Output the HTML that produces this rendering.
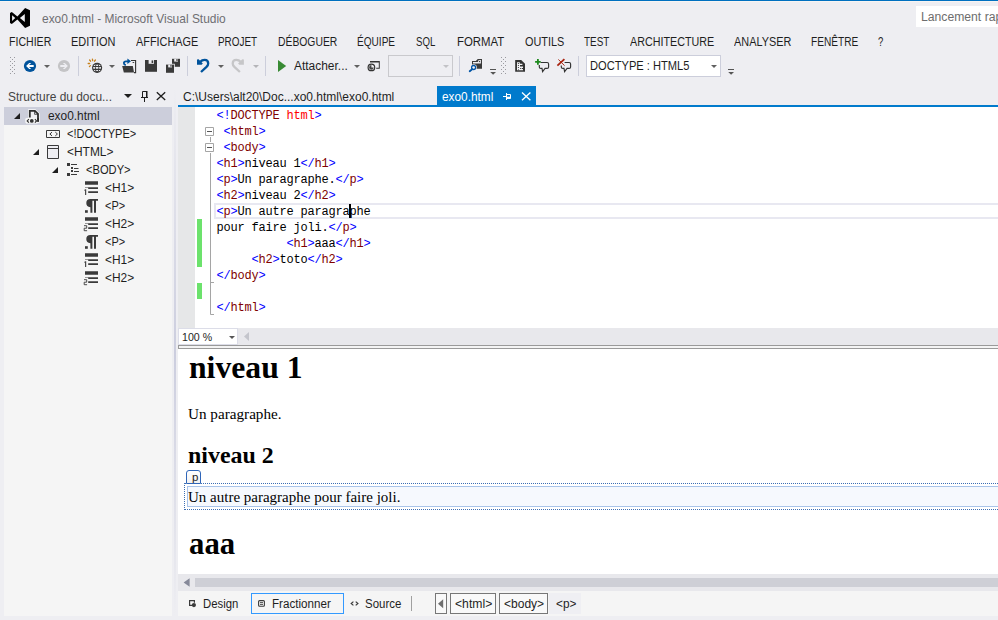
<!DOCTYPE html>
<html><head><meta charset="utf-8"><title>exo0.html - Microsoft Visual Studio</title>
<style>
html,body{margin:0;padding:0;background:#eeeef2;}
body{width:998px;height:620px;overflow:hidden;}
#root{position:relative;width:998px;height:620px;overflow:hidden;background:#eeeef2;font-family:"Liberation Sans",sans-serif;}
#root div,#root span,#root svg{position:absolute;}
.t{white-space:nowrap;transform-origin:0 50%;}
.sep{width:1px;background:#cccedb;top:56px;height:20px;}
.code{left:216.5px;height:16px;font:12px/16px "Liberation Mono",monospace;letter-spacing:-0.2px;white-space:pre;color:#000;}
.code b{font-weight:normal;color:#0000ff;}
.code i{font-style:normal;color:#800000;}
.code u{text-decoration:none;color:#ff0000;}
#root .code b,#root .code i,#root .code u{position:static;}

</style></head>
<body>
<div id="root">
<!-- window frame -->
<div style="left:0;top:0;width:998px;height:1px;background:#0070c0"></div>
<div style="left:0;top:1px;width:998px;height:1px;background:#f7f5f3"></div>
<!-- quick launch -->
<div style="left:916px;top:6px;width:90px;height:21px;background:#fff"></div>

<!-- ===== toolbar ===== -->
<div class="sep" style="left:78px"></div>
<div class="sep" style="left:187px"></div>
<div class="sep" style="left:265px"></div>
<div class="sep" style="left:459px"></div>
<div class="sep" style="left:578px"></div>
<div style="left:388px;top:55px;width:65px;height:22px;border:1px solid #c9c9cd;box-sizing:border-box;background:#eeeef2"></div>
<div style="left:586px;top:55px;width:135px;height:22px;border:1px solid #cccedb;box-sizing:border-box;background:#fff"></div>
<svg id="tb" style="left:0;top:52px" width="760" height="30" viewBox="0 52 760 30">
 <!-- grips -->
 <g fill="#9a9aa0">
  <path d="M10 57h1v1h-1zM14 57h1v1h-1zM12 59h1v1h-1zM10 61h1v1h-1zM14 61h1v1h-1zM12 63h1v1h-1zM10 65h1v1h-1zM14 65h1v1h-1zM12 67h1v1h-1zM10 69h1v1h-1zM14 69h1v1h-1zM12 71h1v1h-1zM10 73h1v1h-1zM14 73h1v1h-1z"/>
  <path transform="translate(491 0)" d="M10 57h1v1h-1zM14 57h1v1h-1zM12 59h1v1h-1zM10 61h1v1h-1zM14 61h1v1h-1zM12 63h1v1h-1zM10 65h1v1h-1zM14 65h1v1h-1zM12 67h1v1h-1zM10 69h1v1h-1zM14 69h1v1h-1zM12 71h1v1h-1zM10 73h1v1h-1zM14 73h1v1h-1z"/>
 </g>
 <!-- back / forward -->
 <circle cx="30" cy="66" r="6.1" fill="#00539c"/>
 <path d="M26.100 66l3.100-3h2l-2.200 2.100h4.700v1.800h-4.700l2.200 2.100h-2z" fill="#fff"/>
 <circle cx="64" cy="66" r="6.1" fill="#c4c4c6"/>
 <path d="M67.900 66l-3.100-3h-2l2.200 2.100h-4.700v1.800h4.700l-2.200 2.100h2z" fill="#eeeef2"/>
 <!-- dropdown arrows -->
 <g fill="#606060">
  <path d="M44 65h6l-3 3z"/><path d="M109 65h6l-3 3z"/><path d="M218 65h6l-3 3z"/><path d="M354 65h6l-3 3z"/><path d="M711 65h6l-3 3z"/>
 </g>
 <path d="M253 65h6l-3 3z" fill="#b4b4b8"/><path d="M443 65h6l-3 3z" fill="#c2c2c6"/>
 <!-- new web (globe + sparks) -->
 <circle cx="97.1" cy="67.8" r="5.1" fill="#3a3a3a"/>
 <clipPath id="gc"><circle cx="97.1" cy="67.8" r="3.9"/></clipPath>
 <g clip-path="url(#gc)" fill="#eeeef2"><path d="M92 64.4h11v1.500h-11zM92 67h11v1.800h-11zM92 69.900h11v1.400h-11z"/></g>
 <ellipse cx="97.1" cy="67.8" rx="1.7" ry="4.4" fill="none" stroke="#3a3a3a" stroke-width="0.9"/>
 <g stroke="#c8801a" stroke-width="1.3" stroke-linecap="round"><path d="M88.200 63.500h1.400M89.600 60l1 1.200M92.400 59.200l.3 1.500M95.400 60l-.9 1.200M89.400 66.600l1-1"/></g>
 <!-- open file -->
 <path d="M131 60.500h4.600v12.100h-1.600" fill="none" stroke="#333" stroke-width="1.100"/>
 <path d="M132.600 62h1.600v.9h-1.600z" fill="#333"/>
 <path d="M122.200 66.100h10.600l1.200 6.500h-10.200z" fill="#3a3a3a"/>
 <path d="M125.800 65.200c-2.600-.6-2.600-3.800.2-3.900h2.600" fill="none" stroke="#00539c" stroke-width="1.800"/>
 <path d="M127.400 58.600l3.600 2.700-3.600 2.700z" fill="#00539c"/>
 <!-- save -->
 <path d="M145 60h12v11.8h-12z" fill="#3a3a3a"/><path d="M148.6 60h5.4v3.8h-5.4z" fill="#eeeef2"/><path d="M151.6 60.4h1.6v2.6h-1.6z" fill="#3a3a3a"/>
 <!-- save all -->
 <path d="M172 58.8h8v8h-8z" fill="#3a3a3a"/><path d="M174.2 58.8h3.8v2.8h-3.8z" fill="#eeeef2"/><path d="M176.4 59h1.2v2h-1.2z" fill="#3a3a3a"/>
 <path d="M165.4 63.8h9.4v9.6h-9.4z" fill="#eeeef2"/>
 <path d="M166 64.6h8v8.2h-8z" fill="#3a3a3a"/><path d="M168.2 64.6h3.8v2.8h-3.8z" fill="#eeeef2"/><path d="M170.4 64.8h1.2v2h-1.2z" fill="#3a3a3a"/>
 <!-- undo -->
 <defs><g id="undo"><path d="M200.300 61.800C201.500 60.400 203 59.800 204.600 59.800 207 59.800 208.200 61.600 208.200 63.400 208.200 65 207.400 66 206.500 66.900L201 72" fill="none" stroke-width="2.300"/>
 <path d="M197 59.500l1.600-.3 4.200 4.400-1.200 1.200h-4.600z" stroke="none"/></g></defs>
 <use href="#undo" fill="#00539c" stroke="#00539c"/>
 <!-- redo -->
 <use href="#undo" fill="#c6c6c8" stroke="#c6c6c8" transform="translate(440.900 0) scale(-1 1)"/>
 <!-- play -->
 <path d="M278 60l8.200 6-8.200 6z" fill="#388a34"/>
 <!-- process icon -->
 <path d="M370 61h9.800v7.800h-3.600v-1h2.600v-5.200h-8.800z" fill="#333"/>
 <circle cx="371.400" cy="67.400" r="3.300" fill="#eeeef2" stroke="#333" stroke-width="1.200"/>
 <path d="M371.400 67.400v-2.300a2.300 2.300 0 1 0 2.300 2.300z" fill="#444"/>
 <!-- find in files -->
 <path d="M472 61.100h3.800l2-2h4.200v9.700h-10z" fill="#3a3a3a"/>
 <path d="M473 62h4.700l1-1.900h2.200v3.300h-7.900z" fill="#eeeef2"/><circle cx="479.500" cy="61.500" r=".65" fill="#3a3a3a"/>
 <circle cx="473.600" cy="67.500" r="3.200" fill="#eeeef2"/>
 <path d="M472.200 69.100l-2.500 2.200" stroke="#eeeef2" stroke-width="3" stroke-linecap="round"/>
 <circle cx="473.600" cy="67.500" r="2" fill="#f4f4f6" stroke="#0054a6" stroke-width="1.300"/><path d="M472.100 69.200l-2.400 2" stroke="#0054a6" stroke-width="1.800" stroke-linecap="round"/>
 <!-- overflow -->
 <g fill="#555"><path d="M490 69h6v1.100h-6zM490.200 72h5.800l-2.900 2.700zM728 69h6v1.100h-6zM728.200 72h5.800l-2.900 2.700z"/></g>
 <!-- doc outline icon -->
 <path d="M515.200 60h6l3.800 3.800v8h-9.800z" fill="#333"/>
 <path d="M517 62.200h2.800v1.500h2.600v1.400h-2.400v1.500h3v3.600h-6z" fill="#f2f2f5"/><g fill="#333"><circle cx="518.400" cy="63.500" r=".6"/><circle cx="518.400" cy="65.500" r=".6"/><circle cx="518.400" cy="67.500" r=".6"/><circle cx="520.600" cy="68.500" r=".6"/><path d="M518.100 69.300h.7v.9h-.7zM521.800 68h1.200v.9h-1.200z"/></g>
 <!-- comment -->
 <path d="M540.600 62.500h6.500q1.500 0 1.500 1.500v2.900q0 1.500-1.500 1.500h-2l-2.500 3.200-.6-3.200h-1.200q-1.500 0-1.500-1.500v-1.900" fill="none" stroke="#333" stroke-width="1.150"/>
 <path d="M537 59.100h1.800v1.900h1.900v1.800h-1.900v1.900h-1.800v-1.900h-1.900v-1.800h1.900z" fill="#1e8a1e"/>
 <!-- uncomment -->
 <path d="M564.600 62.500h4.500q1.500 0 1.500 1.500v2.900q0 1.500-1.500 1.500h-2l-2.500 3.200-.6-3.200h-1.200q-1.500 0-1.500-1.500v-1.400" fill="none" stroke="#333" stroke-width="1.150"/>
 <path d="M564.400 59.200l-7 6.400" stroke="#a8230f" stroke-width="1.800"/><path d="M558.400 59.500l6.200 6.200" stroke="#a8230f" stroke-width="1"/>
</svg>

<!-- ===== VS logo ===== -->
<svg style="left:8px;top:6px" width="24" height="24" viewBox="8 6 24 24">
 <path fill="#000" fill-rule="evenodd" d="M10 13.100l1.800-1.100 5.600 4.400 7.700-8.400 4.900 2.200v15.600l-4.900 2.100-7.700-8.300-5.600 4.400-1.800-1zM12.100 15.200v5.800l3.100-2.900zM24.800 14v8.100l-4.900-4.100z"/>
</svg>

<!-- ===== left panel ===== -->
<div style="left:4px;top:107px;width:168px;height:509px;background:#f5f5f5"></div>
<div style="left:4px;top:107px;width:168px;height:18px;background:#cccedb"></div>
<svg style="left:0;top:86px" width="176" height="210" viewBox="0 86 176 210">
 <!-- header glyphs -->
 <path d="M124 94h8l-4 4z" fill="#1e1e1e"/>
 <path d="M142.500 91.500h4v6" fill="none" stroke="#1e1e1e" stroke-width="1"/><path d="M142.500 91.500v6" stroke="#1e1e1e" stroke-width="1"/><path d="M146 91h1.500v6.500h-1.500z" fill="#1e1e1e"/>
 <path d="M141 97h7v1h-7zM144 98h1v4h-1z" fill="#1e1e1e"/>
 <path d="M156.800 92.200l8.400 7.800M165.200 92.200l-8.400 7.800" stroke="#1e1e1e" stroke-width="1.300"/>
 <!-- expanders -->
 <g fill="#1e1e1e"><path d="M20 113v6h-6z"/><path d="M39 149v6h-6z"/><path d="M58 167v6h-6z"/></g>
 <!-- file icon -->
 <path d="M28.200 118.400v-9.100h7.300l4.200 4.200v9.200h-14.400v-4.300z" fill="#fafafa"/>
 <path d="M29.800 117.600v-6.800h5.100l3.100 3v8" fill="#f0f0f4" stroke="#2d2d2d" stroke-width="1.800"/>
 <path d="M34.600 111v3.300h3.200" fill="none" stroke="#2d2d2d" stroke-width="0.800"/>
 <path d="M26 118.200h11.400v5.200h-11.400z" fill="#fafafa"/>
 <circle cx="31.800" cy="120.900" r="1.900" fill="#333"/>
 <path d="M28.900 119.100l-1.700 1.800 1.700 1.800M34.900 119.100l1.700 1.800-1.700 1.800" fill="none" stroke="#333" stroke-width="1.200"/>
 <path d="M38 118v3.800" stroke="#2d2d2d" stroke-width="1.800"/>
 <!-- doctype icon -->
 <path d="M46.500 130.500h13v7h-13z" fill="#f5f5f5" stroke="#3a3a3a" stroke-width="1"/>
 <path d="M52 132.100l-2.100 1.900 2.100 1.900M55.300 132.100l2.100 1.900-2.100 1.900" fill="none" stroke="#3a3a3a" stroke-width="1"/>
 <!-- html icon -->
 <path d="M47.500 145.500h11v13h-11z" fill="#eeeef2" stroke="#3a3a3a" stroke-width="1"/><path d="M47.500 148.500h11" stroke="#3a3a3a" stroke-width="1"/>
 <!-- body icon -->
 <g fill="#3a3a3a"><path d="M67 163h3v3h-3zM71 164h6v1h-6zM71 167h2v2h-2zM74 168h4.500v1h-4.500zM71 170h2v2h-2zM74 171h5v1h-5zM67 173h3v3h-3zM71 174h6v1h-6z"/></g>
 <!-- heading / paragraph icons -->
 <defs>
  <g id="hd" fill="#3a3a3a"><path d="M85 181.200h13v3.500h-13zM88.200 187.200h9.800v1.700h-9.800zM85 187.200h3.200v.6h-3.200zM88.200 191.200h9.800v1.700h-9.800z"/></g>
  <g id="n1" fill="#3a3a3a"><path d="M85.100 189.200h1.100v5.800h-1.100zM84.100 189.700h1v.9h-1z"/></g>
  <g id="n2" fill="none" stroke="#3a3a3a" stroke-width="0.9"><path d="M84 189.700h2.700v2.500h-2.500v2.500h2.900"/></g>
  <g id="pp" fill="#3a3a3a"><path d="M90.400 199h7.600v1.800h-2v12h-2v-12h-1.600v12h-2v-5.600a4.100 4.100 0 0 1 0-8.200z"/><path d="M85 210.200h2.800v2.600h-2.800z"/></g>
 </defs>
 <use href="#hd"/><use href="#n1"/>
 <use href="#pp"/>
 <use href="#hd" y="36"/><use href="#n2" y="36"/>
 <use href="#pp" y="36"/>
 <use href="#hd" y="72"/><use href="#n1" y="72"/>
 <use href="#hd" y="90"/><use href="#n2" y="90"/>
</svg>

<div style="left:174px;top:88px;width:2px;height:528px;background:linear-gradient(rgba(200,202,220,0),rgba(200,202,220,.9) 50%,rgba(200,202,220,0))"></div>
<!-- ===== document tabs ===== -->
<div style="left:437px;top:86px;width:99px;height:20px;background:#007acc"></div>
<div style="left:178px;top:105px;width:820px;height:2px;background:#007acc"></div>
<svg style="left:500px;top:88px" width="36" height="16" viewBox="500 88 36 16">
 <path d="M506.500 94.500h4v4h-4zM506.500 93v7M503 96.500h3.500" fill="none" stroke="#fff" stroke-width="1"/><path d="M506.500 97.500h4" stroke="#fff" stroke-width="1.600"/>
 <path d="M522 92.400l8.400 7.800M530.400 92.400l-8.400 7.800" stroke="#fff" stroke-width="1.300"/>
</svg>

<!-- ===== code editor ===== -->
<div style="left:178px;top:107px;width:820px;height:221px;background:#fff"></div>
<div style="left:178px;top:107px;width:17px;height:221px;background:#e6e7e8"></div>
<div style="left:214px;top:203px;width:800px;height:16px;border:2px solid #e8e8f1;box-sizing:border-box"></div>
<div style="left:197px;top:219px;width:5px;height:48px;background:#6ce26c"></div>
<div style="left:197px;top:283px;width:5px;height:16px;background:#6ce26c"></div>
<svg style="left:203px;top:124px" width="14" height="194" viewBox="203 124 14 194">
 <g fill="none" stroke="#a5a5a5" stroke-width="1">
  <path d="M210.500 137v5M210.500 153v161.500h3.500M210.500 282.500h3.500"/>
  <path d="M205.500 127.500h8v8h-8zM205.500 143.500h8v8h-8z" fill="#fff"/>
 </g>
 <path d="M207 131h5v1h-5zM207 147h5v1h-5z" fill="#555"/>
</svg>
<div class="code" style="top:108px"><b>&lt;!</b><i>DOCTYPE</i> <u>html</u><b>&gt;</b></div>
<div class="code" style="top:124px"> <b>&lt;</b><i>html</i><b>&gt;</b></div>
<div class="code" style="top:140px"> <b>&lt;</b><i>body</i><b>&gt;</b></div>
<div class="code" style="top:156px"><b>&lt;</b><i>h1</i><b>&gt;</b>niveau 1<b>&lt;/</b><i>h1</i><b>&gt;</b></div>
<div class="code" style="top:172px"><b>&lt;</b><i>p</i><b>&gt;</b>Un paragraphe.<b>&lt;/</b><i>p</i><b>&gt;</b></div>
<div class="code" style="top:188px"><b>&lt;</b><i>h2</i><b>&gt;</b>niveau 2<b>&lt;/</b><i>h2</i><b>&gt;</b></div>
<div class="code" style="top:204px"><b>&lt;</b><i>p</i><b>&gt;</b>Un autre paragraphe</div>
<div class="code" style="top:220px">pour faire joli.<b>&lt;/</b><i>p</i><b>&gt;</b></div>
<div class="code" style="top:236px">          <b>&lt;</b><i>h1</i><b>&gt;</b>aaa<b>&lt;/</b><i>h1</i><b>&gt;</b></div>
<div class="code" style="top:252px">     <b>&lt;</b><i>h2</i><b>&gt;</b>toto<b>&lt;/</b><i>h2</i><b>&gt;</b></div>
<div class="code" style="top:268px"><b>&lt;/</b><i>body</i><b>&gt;</b></div>
<div class="code" style="top:300px"><b>&lt;/</b><i>html</i><b>&gt;</b></div>
<div style="left:349.400px;top:204px;width:1.300px;height:14px;background:#000"></div>

<!-- zoom bar + splitter -->
<div style="left:178px;top:328px;width:820px;height:17px;background:#e8e8ec"></div>
<div style="left:178px;top:328px;width:60px;height:17px;background:#fff;border:1px solid #dcddE8;box-sizing:border-box"></div>
<svg style="left:226px;top:330px" width="28" height="14" viewBox="226 330 28 14">
 <path d="M229 336h6l-3 3z" fill="#555"/><path d="M249 332v9l-5-4.500z" fill="#c4c5cc"/>
</svg>
<div style="left:178px;top:345px;width:830px;height:4px;background:#f4f4f4;border:1px solid #9a9a9a;box-sizing:border-box"></div>

<!-- ===== design view ===== -->
<div style="left:178px;top:349px;width:820px;height:225px;background:#fff"></div>
<div style="left:184px;top:483px;width:820px;height:27px;border:1px dotted #3c6eb4;box-sizing:border-box"></div>
<div style="left:187px;top:486px;width:815px;height:21px;border:1px solid #a9c4e9;background:#f6f9fe;box-sizing:border-box"></div>
<div style="left:186px;top:470px;width:15px;height:14px;border:1px solid #2f66b9;border-radius:3px 3px 0 0;background:linear-gradient(#fff,#f1f1f1);box-sizing:border-box"></div>

<!-- horizontal scrollbar -->
<div style="left:178px;top:574px;width:820px;height:17px;background:#e8e8ec"></div>
<div style="left:195px;top:578px;width:803px;height:9px;background:#cecfd6"></div>
<svg style="left:182px;top:577px" width="10" height="12" viewBox="182 577 10 12"><path d="M189.600 578.200v8.600l-6-4.300z" fill="#868999"/></svg>

<!-- bottom view tabs -->
<div style="left:178px;top:591px;width:820px;height:25px;background:#f5f5f5"></div>
<div style="left:251px;top:593px;width:93px;height:21px;border:1px solid #3399ff;box-sizing:border-box;background:#f5f5f5"></div>
<div style="left:411px;top:596px;width:1px;height:15px;background:#a0a0a0"></div>
<div style="left:435px;top:593px;width:12px;height:21px;border:1px solid #777;box-sizing:border-box;background:#f9f9f9"></div>
<div style="left:450px;top:593px;width:46px;height:21px;border:1px solid #777;box-sizing:border-box;background:#f9f9f9"></div>
<div style="left:499px;top:593px;width:49px;height:21px;border:1px solid #777;box-sizing:border-box;background:#f9f9f9"></div>
<div style="left:549px;top:593px;width:32px;height:21px;background:#efeff3"></div>
<svg style="left:186px;top:596px" width="260" height="16" viewBox="186 596 260 16">
 <path d="M194.400 602.800v-2.200h-4.800v4.800h2.400" fill="none" stroke="#3a3a3a" stroke-width="1.200"/><circle cx="193.900" cy="605.100" r="2.100" fill="#3a3a3a"/>
 <rect x="258.600" y="600.600" width="5.800" height="5.600" rx="1" fill="none" stroke="#3a3a3a" stroke-width="1.100"/><path d="M260 602.600h3M260 604.400h3" stroke="#3a3a3a" stroke-width="0.9"/>
 <path d="M353.400 601.600l-2.200 1.900 2.200 1.900M355.700 601.600l2.200 1.900-2.200 1.900" fill="none" stroke="#3a3a3a" stroke-width="1.200"/>
 <path d="M443.200 599.200v9l-5.200-4.500z" fill="#6e6e6e"/>
</svg>

<span id="t0" class="t" style='left:41.90px;top:11.40px;font:normal 12.4px/16px "Liberation Sans", sans-serif;color:#6f6f73;transform:scaleX(0.9645);'>exo0.html - Microsoft Visual Studio</span>
<span id="t1" class="t" style='left:9.30px;top:35.34px;font:normal 12px/15px "Liberation Sans", sans-serif;color:#1e1e1e;transform:scaleX(0.8812);'>FICHIER</span>
<span id="t2" class="t" style='left:71.30px;top:35.34px;font:normal 12px/15px "Liberation Sans", sans-serif;color:#1e1e1e;transform:scaleX(0.9131);'>EDITION</span>
<span id="t3" class="t" style='left:136.00px;top:35.34px;font:normal 12px/15px "Liberation Sans", sans-serif;color:#1e1e1e;transform:scaleX(0.9072);'>AFFICHAGE</span>
<span id="t4" class="t" style='left:218.00px;top:35.34px;font:normal 12px/15px "Liberation Sans", sans-serif;color:#1e1e1e;transform:scaleX(0.8259);'>PROJET</span>
<span id="t5" class="t" style='left:278.00px;top:35.34px;font:normal 12px/15px "Liberation Sans", sans-serif;color:#1e1e1e;transform:scaleX(0.8633);'>DÉBOGUER</span>
<span id="t6" class="t" style='left:357.00px;top:35.34px;font:normal 12px/15px "Liberation Sans", sans-serif;color:#1e1e1e;transform:scaleX(0.8400);'>ÉQUIPE</span>
<span id="t7" class="t" style='left:416.00px;top:35.34px;font:normal 12px/15px "Liberation Sans", sans-serif;color:#1e1e1e;transform:scaleX(0.8030);'>SQL</span>
<span id="t8" class="t" style='left:457.00px;top:35.34px;font:normal 12px/15px "Liberation Sans", sans-serif;color:#1e1e1e;transform:scaleX(0.9495);'>FORMAT</span>
<span id="t9" class="t" style='left:525.00px;top:35.34px;font:normal 12px/15px "Liberation Sans", sans-serif;color:#1e1e1e;transform:scaleX(0.9067);'>OUTILS</span>
<span id="t10" class="t" style='left:584.00px;top:35.34px;font:normal 12px/15px "Liberation Sans", sans-serif;color:#1e1e1e;transform:scaleX(0.8241);'>TEST</span>
<span id="t11" class="t" style='left:629.50px;top:35.34px;font:normal 12px/15px "Liberation Sans", sans-serif;color:#1e1e1e;transform:scaleX(0.8948);'>ARCHITECTURE</span>
<span id="t12" class="t" style='left:734.00px;top:35.34px;font:normal 12px/15px "Liberation Sans", sans-serif;color:#1e1e1e;transform:scaleX(0.9075);'>ANALYSER</span>
<span id="t13" class="t" style='left:811.00px;top:35.34px;font:normal 12px/15px "Liberation Sans", sans-serif;color:#1e1e1e;transform:scaleX(0.8444);'>FENÊTRE</span>
<span id="t14" class="t" style='left:877.50px;top:35.34px;font:normal 12px/15px "Liberation Sans", sans-serif;color:#1e1e1e;transform:scaleX(0.7925);'>?</span>
<span id="t15" class="t" style='left:921.30px;top:10.04px;font:normal 12px/15px "Liberation Sans", sans-serif;color:#6d6d6d;transform:scaleX(1.0148);'>Lancement rapide</span>
<span id="t16" class="t" style='left:294.00px;top:59.14px;font:normal 12px/15px "Liberation Sans", sans-serif;color:#1e1e1e;transform:scaleX(0.9953);'>Attacher...</span>
<span id="t17" class="t" style='left:590.40px;top:59.34px;font:normal 12px/15px "Liberation Sans", sans-serif;color:#1e1e1e;transform:scaleX(0.9259);'>DOCTYPE : HTML5</span>
<span id="t18" class="t" style='left:8.10px;top:90.14px;font:normal 12px/15px "Liberation Sans", sans-serif;color:#444444;transform:scaleX(0.9930);'>Structure du docu...</span>
<span id="t19" class="t" style='left:47.70px;top:109.34px;font:normal 12px/15px "Liberation Sans", sans-serif;color:#1e1e1e;transform:scaleX(0.9917);'>exo0.html</span>
<span id="t20" class="t" style='left:66.90px;top:127.34px;font:normal 12px/15px "Liberation Sans", sans-serif;color:#1e1e1e;transform:scaleX(0.9183);'>&lt;!DOCTYPE&gt;</span>
<span id="t21" class="t" style='left:66.90px;top:145.34px;font:normal 12px/15px "Liberation Sans", sans-serif;color:#1e1e1e;transform:scaleX(0.9947);'>&lt;HTML&gt;</span>
<span id="t22" class="t" style='left:86.20px;top:163.34px;font:normal 12px/15px "Liberation Sans", sans-serif;color:#1e1e1e;transform:scaleX(0.9286);'>&lt;BODY&gt;</span>
<span id="t23" class="t" style='left:105.00px;top:181.34px;font:normal 12px/15px "Liberation Sans", sans-serif;color:#1e1e1e;transform:scaleX(0.9946);'>&lt;H1&gt;</span>
<span id="t24" class="t" style='left:105.00px;top:199.34px;font:normal 12px/15px "Liberation Sans", sans-serif;color:#1e1e1e;transform:scaleX(0.9126);'>&lt;P&gt;</span>
<span id="t25" class="t" style='left:105.00px;top:217.34px;font:normal 12px/15px "Liberation Sans", sans-serif;color:#1e1e1e;transform:scaleX(0.9946);'>&lt;H2&gt;</span>
<span id="t26" class="t" style='left:105.00px;top:235.34px;font:normal 12px/15px "Liberation Sans", sans-serif;color:#1e1e1e;transform:scaleX(0.9126);'>&lt;P&gt;</span>
<span id="t27" class="t" style='left:105.00px;top:253.34px;font:normal 12px/15px "Liberation Sans", sans-serif;color:#1e1e1e;transform:scaleX(0.9946);'>&lt;H1&gt;</span>
<span id="t28" class="t" style='left:105.00px;top:271.34px;font:normal 12px/15px "Liberation Sans", sans-serif;color:#1e1e1e;transform:scaleX(0.9946);'>&lt;H2&gt;</span>
<span id="t29" class="t" style='left:182.50px;top:90.34px;font:normal 12px/15px "Liberation Sans", sans-serif;color:#1e1e1e;transform:scaleX(0.9994);'>C:\Users\alt20\Doc...xo0.html\exo0.html</span>
<span id="t30" class="t" style='left:441.80px;top:90.14px;font:normal 12px/15px "Liberation Sans", sans-serif;color:#ffffff;transform:scaleX(0.9854);'>exo0.html</span>
<span id="t31" class="t" style='left:182.00px;top:329.82px;font:normal 11.5px/14px "Liberation Sans", sans-serif;color:#1e1e1e;transform:scaleX(0.9232);'>100 %</span>
<span id="t32" class="t" style='left:188.90px;top:349.41px;font:bold 30.5px/38px "Liberation Serif", serif;color:#000;transform:scaleX(1.0383);'>niveau 1</span>
<span id="t33" class="t" style='left:188.20px;top:404.04px;font:normal 15.6px/20px "Liberation Serif", serif;color:#000;transform:scaleX(0.9738);'>Un paragraphe.</span>
<span id="t34" class="t" style='left:188.40px;top:441.34px;font:bold 23px/29px "Liberation Serif", serif;color:#000;transform:scaleX(1.0396);'>niveau 2</span>
<span id="t35" class="t" style='left:191.50px;top:469.79px;font:normal 11px/14px "Liberation Sans", sans-serif;color:#222;transform:scaleX(1.0449);/*noink*/'>p</span>
<span id="t36" class="t" style='left:188.40px;top:487.34px;font:normal 15.6px/20px "Liberation Serif", serif;color:#000;transform:scaleX(0.9619);/*noink*/'>Un autre paragraphe pour faire joli.</span>
<span id="t37" class="t" style='left:189.00px;top:524.91px;font:bold 30.5px/38px "Liberation Serif", serif;color:#000;transform:scaleX(1.0082);'>aaa</span>
<span id="t38" class="t" style='left:203.30px;top:596.84px;font:normal 12px/15px "Liberation Sans", sans-serif;color:#1e1e1e;transform:scaleX(0.9441);'>Design</span>
<span id="t39" class="t" style='left:272.30px;top:596.84px;font:normal 12px/15px "Liberation Sans", sans-serif;color:#1e1e1e;transform:scaleX(0.9701);'>Fractionner</span>
<span id="t40" class="t" style='left:365.30px;top:596.84px;font:normal 12px/15px "Liberation Sans", sans-serif;color:#1e1e1e;transform:scaleX(0.9545);'>Source</span>
<span id="t41" class="t" style='left:454.80px;top:596.84px;font:normal 12px/15px "Liberation Sans", sans-serif;color:#1e1e1e;transform:scaleX(1.0159);'>&lt;html&gt;</span>
<span id="t42" class="t" style='left:503.70px;top:596.84px;font:normal 12px/15px "Liberation Sans", sans-serif;color:#1e1e1e;transform:scaleX(1.0019);'>&lt;body&gt;</span>
<span id="t43" class="t" style='left:555.70px;top:596.84px;font:normal 12px/15px "Liberation Sans", sans-serif;color:#1e1e1e;transform:scaleX(0.9834);'>&lt;p&gt;</span>
</div>
</body></html>
